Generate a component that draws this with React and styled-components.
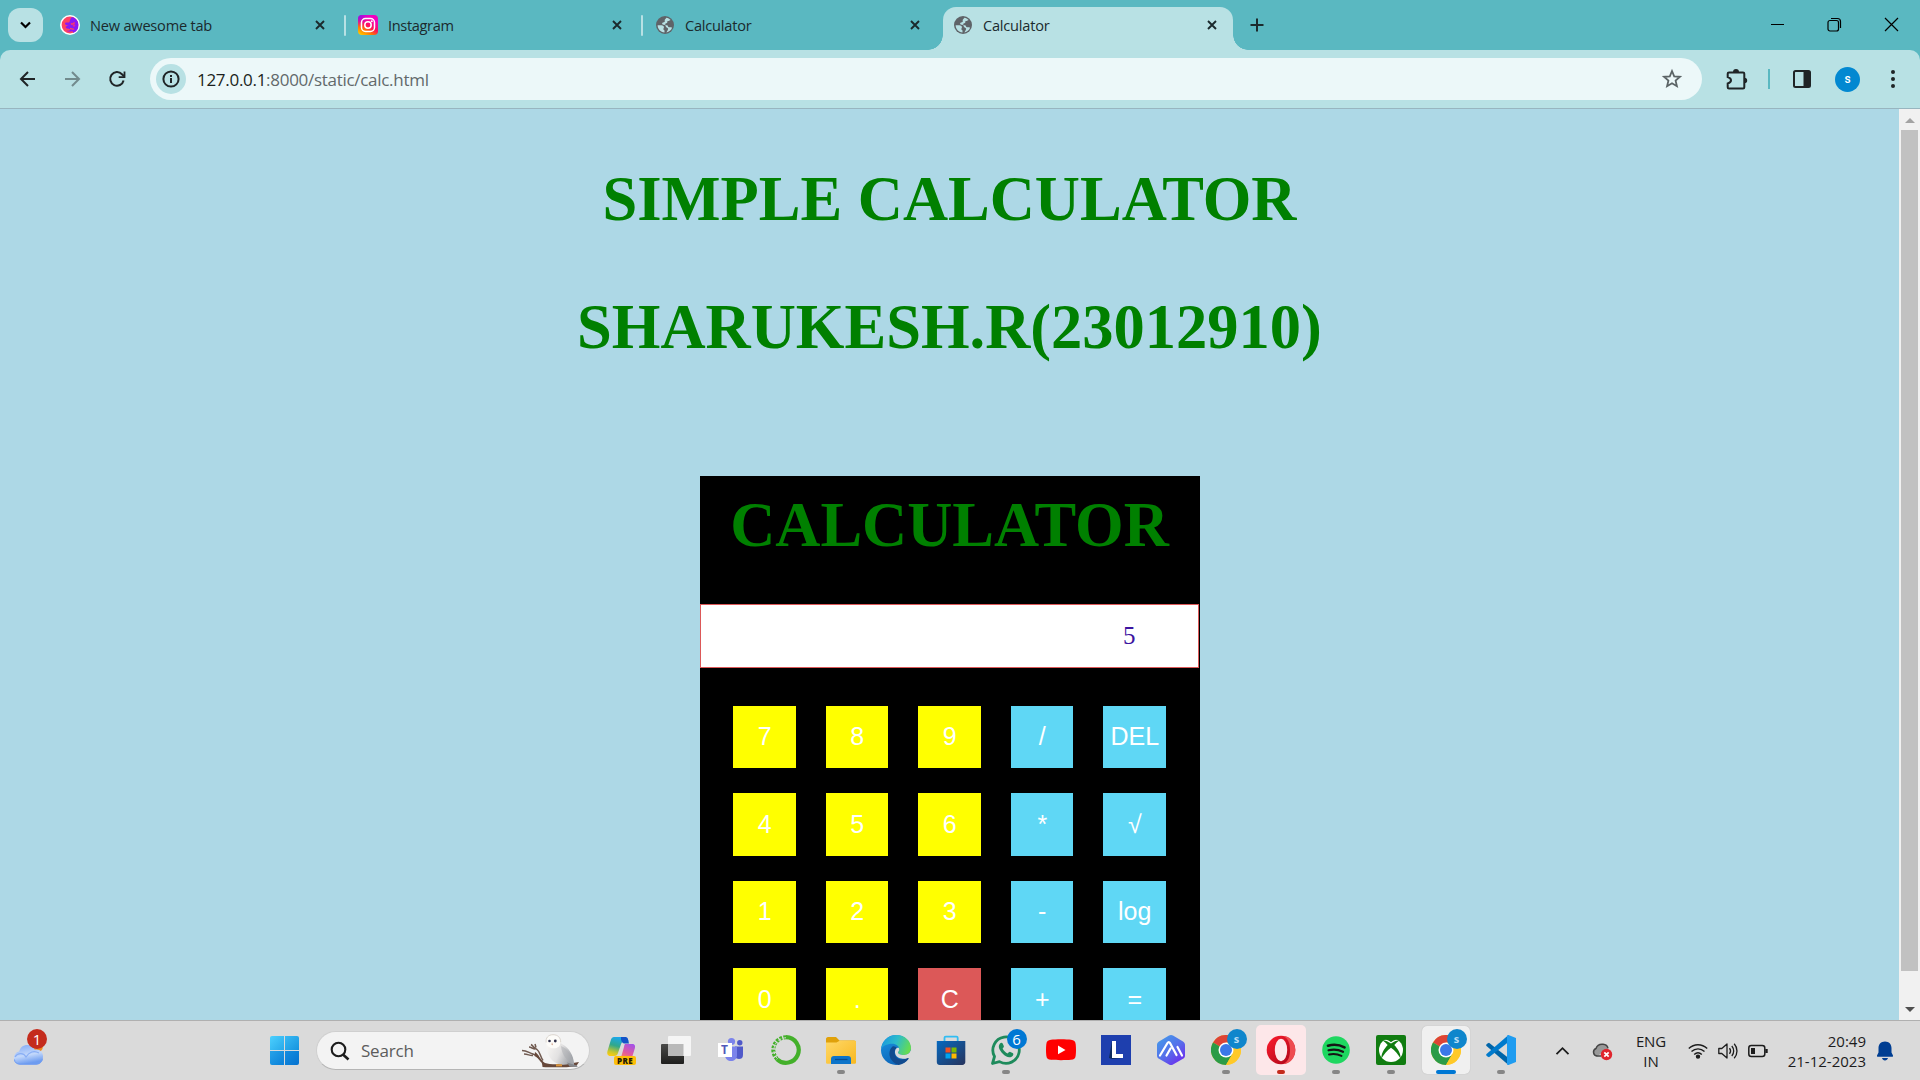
import React from "react";
import styled, { createGlobalStyle } from "styled-components";

const Global = createGlobalStyle`
  *, *::before, *::after { box-sizing: border-box; }
  body { margin: 0; overflow: hidden; background: #add8e6; }
  svg { display: block; flex: none; }
`;

const UI = `"Open Sans", "Noto Sans", sans-serif`;

const Screen = styled.div`
  width: 1920px;
  height: 1080px;
  display: flex;
  flex-direction: column;
  overflow: hidden;
  font-family: ${UI};
`;

/* ---------- tab strip ---------- */
const TabStrip = styled.header`
  height: 50px;
  flex: none;
  display: flex;
  align-items: flex-start;
  background: #5ab8c1;
  color: #1b2a2d;
`;
const TabSearch = styled.button`
  width: 35px;
  height: 34px;
  margin: 8px 5px 0 8px;
  padding: 0;
  border: 0;
  border-radius: 12px;
  background: #b8e1e4;
  display: grid;
  place-items: center;
`;
const Tab = styled.div`
  position: relative;
  width: ${(p) => p.$w}px;
  height: ${(p) => (p.$active ? 43 : 36)}px;
  margin-top: 7px;
  padding: 0 ${(p) => p.$pr}px ${(p) => (p.$active ? 7 : 0)}px ${(p) => p.$pl}px;
  display: flex;
  align-items: center;
  background: ${(p) => (p.$active ? "#b8e1e4" : "transparent")};
  border-radius: 13px 13px 0 0;
  &::before, &::after {
    content: "";
    display: ${(p) => (p.$active ? "block" : "none")};
    position: absolute;
    bottom: 0;
    width: 15px;
    height: 15px;
  }
  &::before { left: -15px; background: radial-gradient(circle at 0 0, transparent 14.5px, #b8e1e4 15px); }
  &::after { right: -15px; background: radial-gradient(circle at 100% 0, transparent 14.5px, #b8e1e4 15px); }
`;
const TabTitle = styled.span`
  flex: 1;
  font-size: 14.6px;
  line-height: 20px;
  letter-spacing: ${(p) => p.$ls || 0}px;
  margin-left: ${(p) => p.$ml || 10}px;
  white-space: nowrap;
`;
const TabDivider = styled.i`
  width: 2px;
  height: 21px;
  margin-top: 15px;
  border-radius: 1px;
  background: #b8e1e4;
`;
const NewTab = styled.span`
  margin: 18px 0 0 17px;
`;
const WindowButtons = styled.div`
  margin: 17px 21px 0 auto;
  display: flex;
  gap: 42px;
`;

/* ---------- toolbar ---------- */
const ToolbarBack = styled.div`
  height: 59px;
  flex: none;
  background: #5ab8c1;
`;
const Toolbar = styled.div`
  height: 59px;
  display: flex;
  align-items: center;
  background: #b8e1e4;
  border-bottom: 1px solid #98b5bf;
  border-radius: 10px 10px 0 0;
  color: #1f2426;
`;
const NavButtons = styled.div`
  width: 150px;
  padding-left: 17px;
  display: flex;
  gap: 25px;
`;
const Omnibox = styled.div`
  width: 1552px;
  height: 42px;
  padding: 0 19px 0 6px;
  border-radius: 21px;
  background: #ecf8f9;
  display: flex;
  align-items: center;
`;
const SiteInfo = styled.span`
  width: 30px;
  height: 30px;
  border-radius: 50%;
  background: #b8e1e4;
  display: grid;
  place-items: center;
`;
const Url = styled.span`
  flex: 1;
  margin: 1px 0 0 11px;
  font-size: 17px;
  line-height: 24px;
  letter-spacing: -0.29px;
  color: #62696b;
  b { font-weight: 400; color: #1b1f20; }
`;
const Actions = styled.div`
  flex: 1;
  padding-left: 22px;
  display: flex;
  align-items: center;
`;
const ActionDivider = styled.i`
  width: 2px;
  height: 20px;
  margin: 0 22px 0 20px;
  background: #5ab8c1;
`;
const Avatar = styled.span`
  width: 25px;
  height: 25px;
  margin: 0 31px 0 23px;
  border-radius: 50%;
  background: #0288d1;
  color: #fff;
  font: 500 12px/25px Roboto, sans-serif;
  text-align: center;
`;

/* ---------- page ---------- */
const Viewport = styled.div`
  height: 911px;
  flex: none;
  display: flex;
  overflow: hidden;
`;
const Page = styled.main`
  width: 1899px;
  padding-top: 54px;
  background: #add8e6;
  font-family: "Liberation Serif", serif;
`;
const Heading = styled.h1`
  margin: 0 0 ${(p) => p.$gap}px;
  font-size: 62.5px;
  line-height: 72px;
  font-weight: 700;
  color: green;
  text-align: center;
  white-space: nowrap;
`;
const Panel = styled.section`
  width: 500px;
  height: 600px;
  margin: 0 auto;
  padding-top: 13px;
  background: #000;
`;
const Display = styled.div`
  width: 499px;
  height: 64px;
  padding-right: 62px;
  border: 1px solid #dc5858;
  background: #fff;
  color: #3c14a0;
  font-size: 25px;
  line-height: 62px;
  text-align: right;
`;
const Keys = styled.div`
  margin: 37.75px 0 0 33.5px;
  display: grid;
  grid-template-columns: repeat(5, 62.5px);
  grid-auto-rows: 62.5px;
  gap: 25px 30px;
`;
const keyColors = { num: "#ffff00", op: "#5fd7f5", clear: "#dc5858" };
const Key = styled.button`
  padding: 0 0 2px 1px;
  border: 0;
  background: ${(p) => keyColors[p.$kind]};
  color: #fff;
  font: 25px/60px "Liberation Sans", Arial, sans-serif;
  text-align: center;
  white-space: nowrap;
`;
const Scrollbar = styled.aside`
  width: 21px;
  padding: 9px 2px 8px;
  display: flex;
  flex-direction: column;
  align-items: center;
  background: #f1f1f1;
`;
const Thumb = styled.div`
  width: 17px;
  height: 841px;
  margin: 7px 0 36px;
  background: #c1c1c1;
`;
const ScrollArrow = styled.i`
  border: 5px solid transparent;
  border-top: ${(p) => (p.$up ? "0" : "5px solid #505050")};
  border-bottom: ${(p) => (p.$up ? "5px solid #a3a3a3" : "0")};
`;

/* ---------- taskbar ---------- */
const Taskbar = styled.footer`
  height: 60px;
  flex: none;
  display: flex;
  align-items: center;
  border-top: 1px solid #b0b0b0;
  background: #dadada;
  color: #1c1c1c;
`;
const Widgets = styled.div`
  position: relative;
  width: 257px;
  padding-left: 13px;
`;
const Badge = styled.span`
  position: absolute;
  left: ${(p) => p.$x}px;
  top: ${(p) => p.$y}px;
  width: 20px;
  height: 20px;
  border-radius: 50%;
  background: ${(p) => p.$bg};
  color: ${(p) => p.$fg || "#fff"};
  font: ${(p) => p.$weight || 400} ${(p) => p.$fs || 15}px/20px ${UI};
  text-align: center;
`;
const Start = styled.div`
  width: 29px;
  height: 29px;
  margin-left: 13px;
  display: grid;
  grid-template-columns: 14px 14px;
  grid-template-rows: 14px 14px;
  gap: 1px;
  border-radius: 2px;
  overflow: hidden;
  i:nth-child(1) { background: linear-gradient(135deg, #4cd0fe, #27a9ea); }
  i:nth-child(2) { background: linear-gradient(135deg, #38b9f3, #1594df); }
  i:nth-child(3) { background: linear-gradient(135deg, #27a3e9, #0a80d8); }
  i:nth-child(4) { background: linear-gradient(135deg, #158ee0, #0572cf); }
`;
const SearchBox = styled.div`
  width: 274px;
  height: 39px;
  margin: 0 3px 0 17px;
  padding: 0 7px 0 13px;
  display: flex;
  align-items: center;
  border: 1px solid #cfcfcf;
  border-bottom-color: #b5b5b5;
  border-radius: 20px;
  background: #f3f3f3;
`;
const SearchLabel = styled.span`
  flex: 1;
  margin-left: 11px;
  font-size: 17px;
  letter-spacing: -0.2px;
  color: #5c5c5c;
`;
const Slot = styled.div`
  position: relative;
  width: 55px;
  height: 59px;
  display: grid;
  place-items: center;
`;
const Tile = styled.div`
  width: ${(p) => p.$s || 50}px;
  height: ${(p) => p.$s || 50}px;
  margin-bottom: 1px;
  display: grid;
  place-items: center;
  border-radius: 5px;
  background: ${(p) => p.$bg || "transparent"};
  box-shadow: ${(p) => (p.$raised ? "0 0 1px #aaa" : "none")};
`;
const Indicator = styled.i`
  position: absolute;
  bottom: 6px;
  left: calc(50% - ${(p) => p.$w / 2}px);
  width: ${(p) => p.$w}px;
  height: 4px;
  border-radius: 2px;
  background: ${(p) => p.$c};
`;
const Tray = styled.div`
  margin-left: auto;
  padding-right: 27px;
  display: flex;
  align-items: center;
`;
const TrayText = styled.div`
  width: ${(p) => p.$w}px;
  margin: 0 ${(p) => p.$mr}px 0 ${(p) => p.$ml}px;
  font-size: 15px;
  line-height: 20px;
  letter-spacing: ${(p) => p.$ls}px;
  text-align: ${(p) => p.$align};
  white-space: nowrap;
`;
const TrayStatus = styled.div`
  display: flex;
  align-items: center;
  gap: 22px;
`;
const TrayIcons = styled.div`
  display: flex;
  gap: 10px;
`;

/* ---------- icons ---------- */
const Stroke = ({ w, h, d, sw = 2, children, ...rest }) => (
  <svg width={w} height={h} viewBox={`0 0 ${w} ${h}`} fill="none" stroke="currentColor" strokeWidth={sw} {...rest}>
    {d && <path d={d} />}
    {children}
  </svg>
);
const CloseIcon = () => <Stroke w={10} h={10} sw={1.9} d="M1 1l8 8M9 1L1 9" />;

const SFavicon = () => (
  <svg width="20" height="20" viewBox="0 0 20 20">
    <circle cx="10" cy="10" r="10" fill="#fff" />
    <circle cx="10" cy="10" r="8.4" fill="#ff4161" />
    <path d="M12 2a8.4 8.4 0 0 1 1 16c.6-1-.3-2-2-1.600-1 .3-3.500.5-4.500-.9 2 .4 3.300.1 3.500-.8.200-1.200-4-.5-4.300-2.400-.2-1.100 1.200-1.400 3.300-1.500C7 10.400 5 10 5 8.500c0-1.300 1.400-1 3.500-1C10.500 7.500 9 4.800 12 2z" fill="#8a19f5" />
    <path d="M11 8.500c1.500 1.500 2.700 0 3.500-1.200M10 13.500c2 0 2.500 1.200 4 .3" stroke="#ff4161" strokeWidth="1.400" fill="none" />
    <circle cx="14" cy="10.500" r="1.200" fill="#e32a96" />
  </svg>
);
const InstaIcon = () => (
  <svg width="20" height="20" viewBox="0 0 20 20">
    <defs>
      <linearGradient id="ig" x1="0.15" y1="1" x2="0.75" y2="0">
        <stop offset="0" stopColor="#ffc800" /><stop offset="0.25" stopColor="#ff7a00" />
        <stop offset="0.5" stopColor="#ff0f5c" /><stop offset="0.85" stopColor="#f000c0" />
      </linearGradient>
      <radialGradient id="ig2" cx="0" cy="0" r="0.6">
        <stop offset="0" stopColor="#6a1cff" /><stop offset="1" stopColor="#c800ff" stopOpacity="0" />
      </radialGradient>
    </defs>
    <rect width="20" height="20" rx="4" fill="url(#ig)" />
    <rect width="20" height="20" rx="4" fill="url(#ig2)" />
    <rect x="3.500" y="3.500" width="13" height="13" rx="4" fill="none" stroke="#fff" strokeWidth="1.500" />
    <circle cx="10" cy="10" r="3.200" fill="none" stroke="#fff" strokeWidth="1.500" />
    <circle cx="13.800" cy="6.200" r="1" fill="#fff" />
  </svg>
);
const GlobeIcon = () => (
  <svg width="18" height="18" viewBox="0 0 18 18">
    <circle cx="9" cy="9" r="9" fill="#5f6368" />
    <path d="M1.600 9.300c2.500.1 5.800-.3 6.300 1.500.3 1.200-.6 1.500-.5 2.400 0 .8 1.200.6 1.100 1.600v1.700C4.500 16.200 1.700 13 1.600 9.300zM10.300 1.700c1.700.3 3.200 1.100 4.300 2.400-.9.200-1.200.8-2 .9-1.200.1-1.400.4-1.300 1.300.1.900-.7 1-1.600 1.100-.8.100-.5 1.300-.1 1.500.8.400 2.200 0 2.300 1.200.1 1 .7 1.200 1.900 1.200 1 0 1.600.1 2.300.4-.9 2.300-3 4.300-5.600 4.700.2-.9.600-1.300 1-2 .5-.9 1.100-1.600 0-2.300-1-.6-1.700-.9-1.800-2-.1-1.200-1.200-1.100-2.200-1.300C6.500 8.600 6 8 6.200 7c.2-.9 1.600-.5 2.300-1.100.7-.6-.1-1.500.3-2.200.4-.8 1.300-1 1.500-2z" fill="#b8e1e4" />
  </svg>
);

const CloudWidget = () => (
  <svg width="31" height="30" viewBox="0 0 31 30">
    <defs>
      <linearGradient id="cl" x1="0" y1="0" x2="0.3" y2="1"><stop offset="0" stopColor="#7fa8f5" /><stop offset="0.6" stopColor="#c3d8fb" /><stop offset="1" stopColor="#6d9cf0" /></linearGradient>
    </defs>
    <circle cx="23" cy="10" r="7" fill="#f08a1d" />
    <path d="M7 28.500a6.500 6.500 0 0 1-.8-12.900C7 11.600 10 9 14.500 9c4 0 6.400 2 7.300 4.700C26 12.500 30 15.500 30 20c0 5-3 8.500-7 8.500z" fill="url(#cl)" />
    <path d="M2 21c3-5 9-4 11 0 3-5 8-7 13-4" fill="none" stroke="#89aef5" strokeWidth="1.200" />
    <path d="M1.500 23.500c0 3 2.500 4.700 5.500 4.700h16c4 0 6.500-3 6.500-5.500" fill="none" stroke="#6f9cf2" strokeWidth="1" />
  </svg>
);
const Owl = () => (
  <svg width="61" height="34" viewBox="0 0 61 34">
    <defs>
      <linearGradient id="owl" x1="0" y1="0" x2="1" y2="0.4"><stop offset="0" stopColor="#fbf9f6" /><stop offset="0.55" stopColor="#e2e1e1" /><stop offset="1" stopColor="#a2a5aa" /></linearGradient>
    </defs>
    <path d="M1 16.500c5 0 7 2.500 11 3.500s6 5 9 8M3 20c4 0 6 2 9 1.500M10 10.500c2 1 3 4 6 5 3 2 3 7 6 11M14 10l1 3.500M8 13c2 0 4 2 6 2" fill="none" stroke="#705a50" strokeWidth="1.500" />
    <path d="M14 18c4 2 5 8 10 11 6 2 20 1.500 34-1l-3 4.500c-10 1-24 1-33.500.5 0-6-4-9-8-11z" fill="#67483a" />
    <path d="M25.500 8C25 17 28 26 36 29.500c4 1.700 9 1.500 12 .5l5 2.500c.7-8-3.500-16.500-9-20.500-2-1.500-3.700-2-5-4z" fill="url(#owl)" />
    <path d="M40 12c7 3 11 9 12.500 17-7-2-11.500-8-12.500-17z" fill="#a9abb0" opacity=".5" />
    <path d="M25 7c0-4 3-6.300 7-6.300s7.500 2.800 7.500 7.300c0 4-2.500 6.300-7 6.300S25 11 25 7z" fill="#fdfcf9" />
    <path d="M25.200 8.500c-.7-4.500 2-7.800 6.800-7.800s7.700 2.800 7.700 7.600" fill="none" stroke="#d4cdc4" strokeWidth=".8" />
    <circle cx="28.500" cy="7" r="1.300" fill="#30304a" /><circle cx="34.300" cy="7" r="1.400" fill="#30304a" />
    <path d="M31 8.200l1 3-1.500-.5z" fill="#c8957c" />
    <path d="M35 30.200h6v2.200h-6z" fill="#d9963f" />
    <path d="M46 28.500l10 3 .5 1.500-8-.5z" fill="#85878c" />
  </svg>
);
const Copilot = () => (
  <svg width="30" height="30" viewBox="0 0 30 30">
    <defs>
      <linearGradient id="cpa" x1="0.5" y1="0" x2="0.2" y2="1"><stop offset="0" stopColor="#1aa8ee" /><stop offset="0.45" stopColor="#31a88b" /><stop offset="0.8" stopColor="#c9c72c" /><stop offset="1" stopColor="#ffcb0c" /></linearGradient>
      <linearGradient id="cpb" x1="0.8" y1="0" x2="0.3" y2="1"><stop offset="0" stopColor="#a352e8" /><stop offset="0.6" stopColor="#e25a9e" /><stop offset="1" stopColor="#f98a55" /></linearGradient>
    </defs>
    <path d="M8 2h10c3 0 4 2 4.500 4.500h-4c-2 0-3 1-3.600 3L12 18c-.5 2-1.500 3-4 3H4.500C1.500 21 .8 18.500 1.500 16L5 4.500C5.600 3 6.500 2 8 2z" fill="url(#cpa)" />
    <path d="M15 2h4c3 0 3 2 4 6.500h-4.500c-2 0-3-2-3.500-4z" fill="#1453c8" />
    <path d="M19 9h7c3 0 3.500 2 2.800 4.500l-2.500 8C26 23 25 24 23 24H12c3-1 3.500-3 4-5l2-7c.4-1.500.2-2 1-3z" fill="url(#cpb)" />
    <rect x="8" y="21" width="22" height="9" rx="2" fill="#fdbe09" />
    <text x="19" y="28.500" fontFamily="Open Sans, sans-serif" fontWeight="800" fontSize="8" textAnchor="middle" fill="#231a05" letterSpacing=".4">PRE</text>
  </svg>
);
const TaskView = () => (
  <svg width="30" height="30" viewBox="0 0 30 30">
    <defs><linearGradient id="tv" x1="0" y1="0" x2="0" y2="1"><stop offset="0" stopColor="#4a4a48" /><stop offset="1" stopColor="#1e1e1d" /></linearGradient></defs>
    <rect x="0" y="9" width="23" height="20" rx="1" fill="url(#tv)" />
    <rect x="7" y="1" width="23" height="20" rx="1" fill="#f5f5f5" />
    <path d="M7 9h15.500v12H7z" fill="#b9b9b9" />
  </svg>
);
const Teams = () => (
  <svg width="30" height="30" viewBox="0 0 30 30">
    <circle cx="15.500" cy="6.500" r="3.600" fill="#7b83eb" /><circle cx="23.800" cy="7.700" r="2.700" fill="#5059c9" />
    <path d="M19 11.500h8v8.500c0 3-2 4-4 4s-4-1-4-4z" fill="#5059c9" />
    <path d="M9 11.500h12V20c0 4-3 6-6 6s-6-2-6-6z" fill="#7b83eb" />
    <rect x="2" y="8" width="14" height="14" fill="#fff" />
    <text x="8.500" y="19" fontFamily="Open Sans, sans-serif" fontWeight="700" fontSize="12" textAnchor="middle" fill="#5059b9">T</text>
  </svg>
);
const GreenRing = () => (
  <svg width="30" height="30" viewBox="0 0 30 30" fill="none">
    <path d="M15 2.200a12.800 12.800 0 1 1-9 22" stroke="#43b02a" strokeWidth="4.200" />
    <path d="M15 2.200A12.800 12.800 0 0 0 6 24" stroke="#43b02a" strokeWidth="4" strokeDasharray="2.600 1.300" />
    <path d="M15 2.800A12.200 12.200 0 0 0 6.400 23.500" stroke="#dadada" strokeWidth="1" strokeDasharray="3 2" />
  </svg>
);
const Folder = () => (
  <svg width="30" height="30" viewBox="0 0 30 30">
    <defs><linearGradient id="fo" x1="0" y1="0" x2="1" y2="1"><stop offset="0" stopColor="#ffd868" /><stop offset="1" stopColor="#f8b81f" /></linearGradient></defs>
    <path d="M0 4c0-1 .8-2 2-2h8l3.500 3.500H28c1 0 2 .8 2 2V12H0z" fill="#e0a10a" />
    <path d="M0 7.500h10.500L14 5.500h14.500c1 0 1.500.8 1.500 1.500v20.500c0 .8-.7 1.300-1.500 1.300h-27C.7 28.800 0 28.300 0 27.500z" fill="url(#fo)" />
    <path d="M5 29v-5c0-2 1-3 3-3h14c2 0 3 1 3 3v5z" fill="#0d74c9" />
    <path d="M9 24.500h12.500" stroke="#084d91" strokeWidth="1.200" />
  </svg>
);
const Edge = () => (
  <svg width="30" height="30" viewBox="0 0 30 30">
    <defs>
      <linearGradient id="ea" x1="0" y1="0.2" x2="1" y2="0.5"><stop offset="0" stopColor="#1996df" /><stop offset="0.5" stopColor="#2cbccb" /><stop offset="1" stopColor="#66dc51" /></linearGradient>
      <linearGradient id="eb" x1="0.3" y1="0" x2="0.7" y2="1"><stop offset="0" stopColor="#1a91df" /><stop offset="1" stopColor="#0b61b5" /></linearGradient>
    </defs>
    <circle cx="15" cy="15" r="15" fill="url(#eb)" />
    <path d="M30 13c0 4-3 7-7 7l-2 3 6.500 1.500 3.500-5z" fill="#dadada" />
    <path d="M.2 14C1 6 7.500 0 15.500 0 24 0 30 6 30 13c0 4-3 7-7 7-3.500 0-6-1.200-6-2.500 0-.8 1.300-1.300 1.300-3.300 0-3-3-5.500-7.300-5.500C6 8.700 1.500 11 .2 14z" fill="url(#ea)" />
    <path d="M11.500 11.500c-4 3.500-4 10-.5 14 1.500 2 4 4 6.500 4.400 4-.6 7.500-2.900 10-6 .5-.8 0-1.200-.8-.8-7 3.500-13-.2-13-5.700 0-2.500 1.200-3.800 2-4.300-1-1.500-2.700-2.300-4.200-1.600z" fill="#114b8f" />
    <path d="M16.500 12.800c-2 .8-2.700 3-2.500 5 .7 5 6.500 7.500 12.500 5 1.500-1 2.500-2.700 3-4.500-1.500 1.200-3.700 1.700-6.500 1.700-3.500 0-6-1.200-6-2.500 0-.8 1.300-1.300 1.300-3.300 0-.5-.3-1-.6-1.400z" fill="#dadada" />
  </svg>
);
const Store = () => (
  <svg width="30" height="30" viewBox="0 0 30 30">
    <defs><linearGradient id="st" x1="0" y1="0" x2="1" y2="1"><stop offset="0" stopColor="#0669bf" /><stop offset="1" stopColor="#27335c" /></linearGradient></defs>
    <path d="M8.500 6.500V2.800c0-.8.500-1.200 1.300-1.200h10.600c.8 0 1.300.4 1.300 1.200v3.700" fill="none" stroke="#31bdf3" strokeWidth="1.800" />
    <path d="M.8 6h28.500v21c0 1.600-1.300 3-3 3H3.700C2 30 .8 28.700.8 27z" fill="url(#st)" />
    <path d="M9.500 12.500h5v5h-5z" fill="#f25022" /><path d="M15.500 12.500h5v5h-5z" fill="#7fba00" />
    <path d="M9.500 18.500h5v5h-5z" fill="#00a4ef" /><path d="M15.500 18.500h5v5h-5z" fill="#ffb900" />
  </svg>
);
const WhatsApp = () => (
  <svg width="30" height="30" viewBox="0 0 30 30">
    <path d="M1.500 28.500l2-7A13.200 13.200 0 1 1 8.500 26.600z" fill="none" stroke="#1e8b5c" strokeWidth="2.800" strokeLinejoin="round" />
    <path d="M9 8.500c1-1.200 2.200-1 2.800.2l1 2.200c.4 1-.5 1.700-1.200 2.500 1.300 2.400 2.900 4 5.200 5 .8-.8 1.500-1.900 2.500-1.500l2.300 1.200c1 .6 1 1.600.2 2.600-3 3.200-7 1-10-2-3.300-3.400-5.400-7.200-2.800-10.200z" fill="#1e8b5c" />
  </svg>
);
const YouTube = () => (
  <svg width="30" height="30" viewBox="0 0 30 30">
    <path d="M5 4.700C9 4 21 4 25 4.700c3 .3 4.400 1.600 4.700 4.500.4 4 .4 7.500 0 11.300-.3 3-1.700 4-4.700 4.300-5 .5-15 .5-20 0C2 24.500.6 23.500.3 20.500c-.4-3.800-.4-7.300 0-11.300C.6 6.300 2 5 5 4.700z" fill="#f00" />
    <path d="M12 10.600v8.600l7.500-4.300z" fill="#fff" />
  </svg>
);
const LApp = () => (
  <svg width="30" height="30" viewBox="0 0 30 30">
    <path d="M0 0h30v30H0z" fill="#1e3fae" />
    <path d="M11 6L8 23l3 1 10-1-9-3z" fill="#0d2a5c" />
    <path d="M11 6h4v13h7v4H11z" fill="#fff" />
  </svg>
);
const HexApp = () => (
  <svg width="30" height="30" viewBox="0 0 30 30">
    <defs><linearGradient id="hx" x1="0" y1="0" x2="0.8" y2="1"><stop offset="0" stopColor="#42a0ea" /><stop offset="0.55" stopColor="#5570ea" /><stop offset="1" stopColor="#6d2bee" /></linearGradient></defs>
    <path d="M13 .6c1.200-.7 2.800-.7 4 0l10 5.800c1.300.7 2 2 2 3.400v10.600c0 1.400-.7 2.700-2 3.400l-10 5.600c-1.200.7-2.800.7-4 0L3 23.800c-1.300-.7-2-2-2-3.400V9.800c0-1.400.7-2.700 2-3.400z" fill="url(#hx)" />
    <path d="M4 20.500L11.500 8c.8-1.300 1.800-1.300 2.500 0l6.500 12M10.500 20.500l4-7M21.500 12l4.500 8.500" fill="none" stroke="#fff" strokeWidth="2.200" strokeLinecap="round" />
  </svg>
);
const Chrome = () => (
  <svg width="30" height="30" viewBox="0 0 30 30">
    <circle cx="15" cy="15" r="15" fill="#ffc928" />
    <path d="M15 15L2 7.500A15 15 0 0 1 28 7.500H15z" fill="#dd4436" />
    <path d="M15 15L2 7.500A15 15 0 0 0 15 30l6.500-11.200z" fill="#2b9b47" />
    <path d="M28 7.500A15 15 0 0 1 15 30l6.500-11.200L20 7.500z" fill="#ffc928" />
    <circle cx="15" cy="15" r="7.500" fill="#fff" /><circle cx="15" cy="15" r="6" fill="#3b78e7" />
  </svg>
);
const Opera = () => (
  <svg width="30" height="30" viewBox="0 0 30 30">
    <defs><linearGradient id="op" x1="0" y1="0" x2="1" y2="1"><stop offset="0" stopColor="#ff1b2d" /><stop offset="0.6" stopColor="#c80f20" /><stop offset="1" stopColor="#a70014" /></linearGradient></defs>
    <circle cx="15" cy="15" r="14.300" fill="url(#op)" />
    <path d="M17 1c7 0 12.300 6 12.300 14S24 29 17 29c5-2 7-7 7-14s-2-12-7-14z" fill="#ee4b4f" />
    <ellipse cx="15" cy="15" rx="6.200" ry="11.300" fill="#fde7e9" />
  </svg>
);
const Spotify = () => (
  <svg width="30" height="30" viewBox="0 0 30 30" fill="none" stroke="#151515" strokeLinecap="round">
    <circle cx="15" cy="15" r="13.800" fill="#1ed760" stroke="none" />
    <path d="M7 10.700c5.500-1.600 11.500-1 16.500 1.700" strokeWidth="2.700" />
    <path d="M7.500 15.300c5-1.400 10-.8 14.500 1.500" strokeWidth="2.200" />
    <path d="M8 19.500c4.500-1.100 8.500-.6 12.500 1.400" strokeWidth="1.900" />
  </svg>
);
const Xbox = () => (
  <svg width="30" height="30" viewBox="0 0 30 30">
    <rect width="30" height="30" rx="2" fill="#107c10" />
    <circle cx="15" cy="15" r="12" fill="#fff" />
    <path d="M8 5c3-.7 5 .8 7 2.200C17 5.800 19 4.300 22 5l-2-2.500H10z" fill="#107c10" />
    <path d="M15 8.500C11 6 8.500 5 7 5.800c1.500 1 3 2.500 4.700 4.200C8 14 5 19 5.500 23.500 7.500 20 11 15.500 15 12.800c4 2.700 7.500 7.200 9.500 10.700.5-4.500-2.500-9.500-6.200-13.500C20 8.300 21.500 6.800 23 5.800 21.500 5 19 6 15 8.500z" fill="#107c10" />
  </svg>
);
const VSCode = () => (
  <svg width="30" height="30" viewBox="0 0 30 30">
    <path d="M1.500 8.500L3 7.800 22.500 23v7L.5 11c-.7-.8-.2-1.700 1-2.500z" fill="#0065a9" />
    <path d="M1.500 21.500l1.500.7L22.500 7V0L.5 19c-.7.800-.2 1.700 1 2.500z" fill="#007acc" />
    <path d="M22.500 0L30 3v24l-7.500 3c-1 0-1.500-.5-1.500-1.500v-27C21 .5 21.500 0 22.500 0z" fill="#1f9cf0" />
  </svg>
);

const CloudError = () => (
  <svg width="21" height="20" viewBox="0 0 21 20">
    <path d="M5 15.500a4 4 0 0 1-1-7.800C5 4.500 8 3 11 3.300c2.500.2 4.500 1.700 5 4" fill="#999" />
    <path d="M9 15H5a3.900 3.900 0 0 1-1-7.500C5 4.500 8 3 11 3.300c2.500.2 4.500 1.700 5 4" fill="none" stroke="#454545" strokeWidth="1.500" />
    <circle cx="14.500" cy="13.500" r="5.700" fill="#e0252d" />
    <path d="M12.300 11.300l4.400 4.400m0-4.400l-4.400 4.400" stroke="#fff" strokeWidth="1.700" />
  </svg>
);
const Bell = () => (
  <svg width="16" height="20" viewBox="0 0 16 20" fill="#003e92">
    <path d="M8 .5c4 0 6.500 2.800 6.500 6.500v4.500L16 14.500c.2.800-.2 1.300-1 1.300H1c-.8 0-1.200-.5-1-1.300l1.500-3V7C1.500 3.300 4 .5 8 .5zM5 17h6c-.4 1.600-1.500 2.500-3 2.500S5.400 18.600 5 17z" />
  </svg>
);

const gray = { $w: 8, $c: "#868686" };
const apps = [
  { Icon: Copilot }, { Icon: TaskView }, { Icon: Teams }, { Icon: GreenRing },
  { Icon: Folder, ind: gray }, { Icon: Edge }, { Icon: Store },
  { Icon: WhatsApp, ind: gray, badge: "6" },
  { Icon: YouTube }, { Icon: LApp }, { Icon: HexApp },
  { Icon: Chrome, ind: gray, badge: "s" },
  { Icon: Opera, ind: { $w: 8, $c: "#c42b1c" }, tile: { $bg: "#fde7e9" } },
  { Icon: Spotify, ind: gray }, { Icon: Xbox, ind: gray },
  { Icon: Chrome, ind: { $w: 20, $c: "#0078d4" }, badge: "s", tile: { $bg: "#f0f0f0", $s: 48, $raised: true } },
  { Icon: VSCode, ind: gray },
];

const keys = [
  ["7", "8", "9", "/", "DEL"],
  ["4", "5", "6", "*", "√"],
  ["1", "2", "3", "-", "log"],
  ["0", ".", "C", "+", "="],
];
const kindOf = (label) => (label === "C" ? "clear" : /^[0-9.]$/.test(label) ? "num" : "op");

export default function App() {
  return (
    <Screen>
      <Global />
      <TabStrip>
        <TabSearch><Stroke w={11} h={8} sw={2.2} d="M1 1.500l4.500 4.500L10 1.500" /></TabSearch>
        <Tab $w={296} $pl={12} $pr={19}>
          <SFavicon /><TabTitle $ls={-0.22}>New awesome tab</TabTitle><CloseIcon />
        </Tab>
        <TabDivider />
        <Tab $w={295} $pl={12} $pr={19}>
          <InstaIcon /><TabTitle $ls={-0.35}>Instagram</TabTitle><CloseIcon />
        </Tab>
        <TabDivider />
        <Tab $w={300} $pl={13} $pr={23}>
          <GlobeIcon /><TabTitle $ml={11} $ls={-0.22}>Calculator</TabTitle><CloseIcon />
        </Tab>
        <Tab $active $w={290} $pl={11} $pr={16}>
          <GlobeIcon /><TabTitle $ml={11} $ls={-0.22}>Calculator</TabTitle><CloseIcon />
        </Tab>
        <NewTab><Stroke w={14} h={14} d="M7 .5v13M.5 7h13" /></NewTab>
        <WindowButtons>
          <Stroke w={15} h={15} sw={1} stroke="#000" d="M1 7.500h13" />
          <Stroke w={15} h={15} sw={1.2} stroke="#000">
            <rect x="1" y="3.500" width="10.500" height="10.500" rx="2" />
            <path d="M4 1.500h6.500a3 3 0 0 1 3 3V11" />
          </Stroke>
          <Stroke w={15} h={15} sw={1.2} stroke="#000" d="M1 1l13 13M14 1L1 14" />
        </WindowButtons>
      </TabStrip>

      <ToolbarBack>
        <Toolbar>
          <NavButtons>
            <Stroke w={20} h={20} d="M18 10H4.500M11 3l-7 7 7 7" />
            <Stroke w={20} h={20} opacity={0.45} d="M3 10h13.500M10 3l7 7-7 7" />
            <Stroke w={20} h={20}>
              <path d="M16.600 11.500A6.800 6.800 0 1 1 15 5.300l2 2" />
              <path d="M17.500 2.500v5.700h-5.800" strokeWidth="1.800" />
            </Stroke>
          </NavButtons>
          <Omnibox>
            <SiteInfo>
              <Stroke w={18} h={18}>
                <circle cx="9" cy="9" r="7.600" />
                <path d="M9 8v5M9 5v1.900" />
              </Stroke>
            </SiteInfo>
            <Url><b>127.0.0.1</b>:8000/static/calc.html</Url>
            <Stroke w={22} h={22} sw={1.8} stroke="#5b6466" d="M11 3l2.200 5.300 5.800.5-4.400 3.800 1.300 5.600L11 15.200l-4.900 3 1.300-5.600L3 8.800l5.800-.5z" />
          </Omnibox>
          <Actions>
            <svg width="24" height="24" viewBox="0 0 24 24">
              <path d="M5 5.500h14c.9 0 1.300.4 1.300 1.300v13.400c0 .9-.4 1.300-1.300 1.300H5c-.9 0-1.300-.4-1.300-1.300v-3.700c2.500-.7 3.300-1.900 3.300-3.200s-.8-2.500-3.300-3.200V6.800c0-.9.400-1.300 1.300-1.300z" fill="none" stroke="#1f2426" strokeWidth="2" />
              <path d="M9 5a3 3 0 0 1 6 0zM20.500 10.800a2.700 2.700 0 0 1 0 5.400z" fill="#1f2426" />
            </svg>
            <ActionDivider />
            <svg width="20" height="20" viewBox="0 0 20 20">
              <rect x="2" y="2" width="16" height="16" rx="1.500" fill="none" stroke="#1f2426" strokeWidth="2" />
              <path d="M11.500 2H18v16h-6.500z" fill="#1f2426" />
            </svg>
            <Avatar>s</Avatar>
            <svg width="4" height="18" viewBox="0 0 4 18" fill="#1f2426">
              <circle cx="2" cy="2" r="2" /><circle cx="2" cy="9" r="2" /><circle cx="2" cy="16" r="2" />
            </svg>
          </Actions>
        </Toolbar>
      </ToolbarBack>

      <Viewport>
        <Page>
          <Heading $gap={56}>SIMPLE CALCULATOR</Heading>
          <Heading $gap={113}>SHARUKESH.R(23012910)</Heading>
          <Panel>
            <Heading $gap={43}>CALCULATOR</Heading>
            <Display>5</Display>
            <Keys>
              {keys.flat().map((label) => <Key key={label} $kind={kindOf(label)}>{label}</Key>)}
            </Keys>
          </Panel>
        </Page>
        <Scrollbar>
          <ScrollArrow $up />
          <Thumb />
          <ScrollArrow />
        </Scrollbar>
      </Viewport>

      <Taskbar>
        <Widgets>
          <CloudWidget />
          <Badge $x={27} $y={-7} $bg="#c42b1c">1</Badge>
        </Widgets>
        <Start><i /><i /><i /><i /></Start>
        <SearchBox>
          <Stroke w={20} h={20} sw={2.1}><circle cx="8.500" cy="8.500" r="6.800" /><path d="M13 13.500l5.500 5" strokeWidth="2.600" /></Stroke>
          <SearchLabel>Search</SearchLabel>
          <Owl />
        </SearchBox>
        {apps.map(({ Icon, ind, badge, tile }, i) => (
          <Slot key={i}>
            <Tile {...tile}><Icon /></Tile>
            {badge && (
              <Badge
                $x={28.500} $y={8}
                $bg={badge === "s" ? "#0f86cc" : "#0078d4"}
                $fg={badge === "s" ? "#b5dcf5" : "#fff"}
                $weight={badge === "s" ? 700 : 400}
                $fs={badge === "s" ? 11 : 15}
              >{badge}</Badge>
            )}
            {ind && <Indicator {...ind} />}
          </Slot>
        ))}
        <Tray>
          <TrayStatus>
            <Stroke w={15} h={10} sw={1.8} d="M1.500 8.200l6-6 6 6" />
            <CloudError />
          </TrayStatus>
          <TrayText $w={34} $ml={21} $mr={20} $ls={-0.1} $align="center">ENG<br />IN</TrayText>
          <TrayIcons>
            <Stroke w={20} h={20} sw={1.400}>
              <path d="M.8 7.500c5.300-5 13-5 18.400 0M3.500 10.600c3.800-3.700 9.200-3.700 13 0M6.200 13.500c2.300-2.200 5.300-2.200 7.600 0" />
              <circle cx="10" cy="15.600" r="1.500" fill="currentColor" />
            </Stroke>
            <Stroke w={20} h={20} sw={1.300}>
              <path d="M.8 7.500h3L9 3v14l-5.200-4.500h-3z" strokeLinejoin="round" />
              <path d="M11.500 7.200c1.300 1.700 1.300 3.900 0 5.600M13.800 5c2.500 2.900 2.500 7.100 0 10M16.200 2.800c3.700 4.200 3.700 10.200 0 14.400" />
            </Stroke>
            <Stroke w={20} h={20} sw={1.500}>
              <rect x=".8" y="4.500" width="16" height="11" rx="2.500" />
              <path d="M3 7h4v6H3z" fill="currentColor" stroke="none" />
              <path d="M18.500 8v4" strokeWidth="2.400" />
            </Stroke>
          </TrayIcons>
          <TrayText $w={90} $ml={8} $mr={11} $ls={0} $align="right">20:49<br />21-12-2023</TrayText>
          <Bell />
        </Tray>
      </Taskbar>
    </Screen>
  );
}
